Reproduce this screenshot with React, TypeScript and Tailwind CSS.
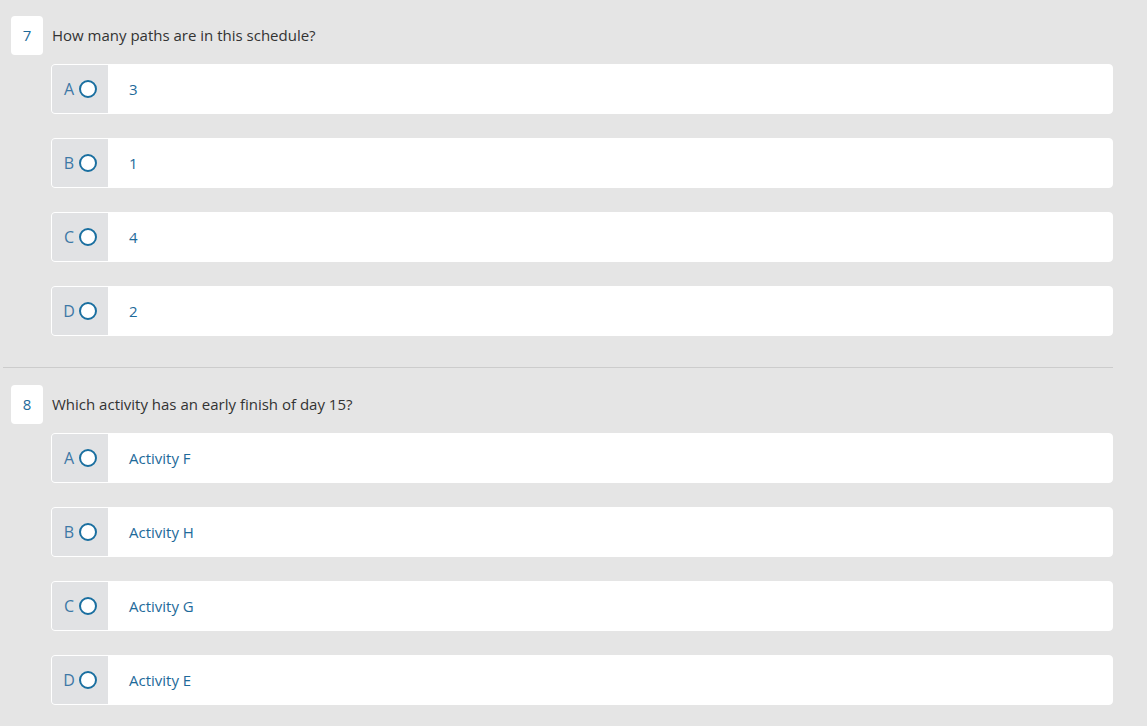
import React from "react";

type Q = { n: number; text: string; options: string[] };

const qs: Q[] = [
  { n: 7, text: "How many paths are in this schedule?", options: ["3", "1", "4", "2"] },
  {
    n: 8,
    text: "Which activity has an early finish of day 15?",
    options: ["Activity F", "Activity H", "Activity G", "Activity E"],
  },
];

const letters = ["A", "B", "C", "D"];

function Question({ q }: { q: Q }) {
  return (
    <div>
      <div className="flex items-center pl-[11px]">
        <div className="w-[32px] h-[39px] bg-white rounded-[4px] flex items-center justify-center text-[15px] text-[#1e6a9a]">
          {q.n}
        </div>
        <div className="ml-[9px] text-[15px] text-[#333333]">{q.text}</div>
      </div>
      <div className="mt-[9px] ml-[51px] mr-[34px] flex flex-col gap-[24px]">
        {q.options.map((o, i) => (
          <div
            key={i}
            className="h-[50px] flex items-stretch bg-white border border-white rounded-[4px] overflow-hidden"
          >
            <div className="w-[56px] bg-[#e1e2e4] flex items-center pl-[10px] gap-[3px]">
              <span className="text-[16px] text-[#3d78a6] w-[14px] text-center">{letters[i]}</span>
              <span className="w-[18px] h-[18px] rounded-full border-2 border-[#1a6fa0] bg-white" />
            </div>
            <div className="flex items-center pl-[21px] text-[15px] text-[#1e6a9a]">{o}</div>
          </div>
        ))}
      </div>
    </div>
  );
}

export default function App() {
  return (
    <div
      className="w-[1147px] h-[726px] bg-[#e5e5e5] pt-[16px] overflow-hidden"
      style={{ fontFamily: '"Open Sans", "Noto Sans", sans-serif' }}
    >
      <Question q={qs[0]} />
      <div className="mt-[31px] ml-[3px] mr-[34px] h-px bg-[#cccccc]" />
      <div className="mt-[17px]">
        <Question q={qs[1]} />
      </div>
    </div>
  );
}
